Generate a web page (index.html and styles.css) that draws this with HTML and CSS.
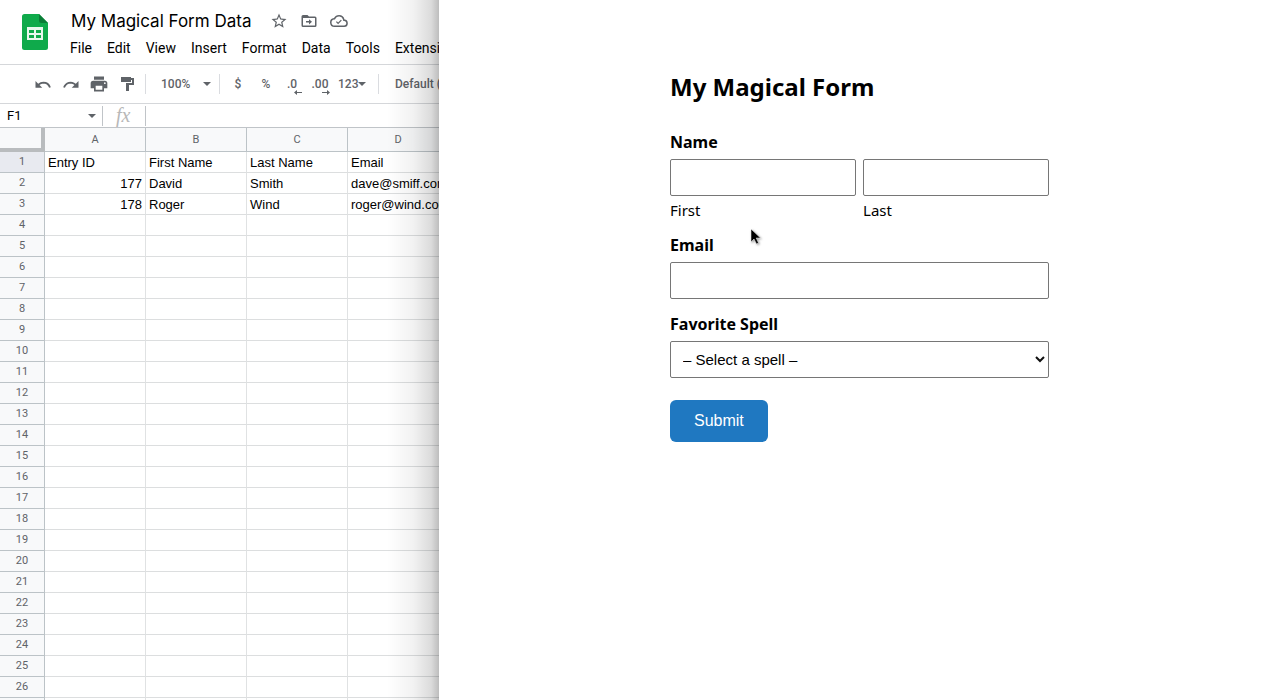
FILE: index.html
```html
<!DOCTYPE html>
<html lang="en">
<head>
  <meta charset="UTF-8">
  <meta name="viewport" content="width=device-width, initial-scale=1.0">
  <title>My Magical Form</title>
  <link rel="stylesheet" href="styles.css">
</head>
<body>
  <!-- Spreadsheet -->
  <section class="sheet">
    <header class="sheet-header">
      <svg class="logo" width="26" height="36" viewBox="0 0 26 36">
        <path fill="#0faa4b" d="M2.500 0H17l9 9v24.500a2.500 2.500 0 0 1-2.500 2.500h-21A2.500 2.500 0 0 1 0 33.500v-31A2.500 2.500 0 0 1 2.500 0z"/>
        <path fill="#0b7d37" d="M17 0l9 9h-6.500A2.500 2.500 0 0 1 17 6.500z"/>
        <path fill="#e9f8ee" fill-rule="evenodd" d="M5 13h16v13H5zM7 16v3h5v-3zM14 16v3h5v-3zM7 21v3h5v-3zM14 21v3h5v-3z"/>
      </svg>
      <div class="sheet-heading">
        <div class="title-row">
          <span class="sheet-title">My Magical Form Data</span>
          <button class="icon-button" aria-label="Star">
            <svg width="18" height="18" viewBox="0 0 24 24"><path fill="#5f6368" d="M22 9.240l-7.190-.620L12 2 9.190 8.630 2 9.240l5.460 4.730L5.820 21 12 17.270 18.180 21l-1.630-7.030L22 9.240zM12 15.400l-3.760 2.270 1-4.280-3.320-2.880 4.380-.380L12 6.100l1.710 4.040 4.380.380-3.320 2.880 1 4.280L12 15.400z"/></svg>
          </button>
          <button class="icon-button" aria-label="Move">
            <svg width="18" height="18" viewBox="0 0 24 24"><path fill="#5f6368" d="M20 6h-8l-2-2H4a2 2 0 0 0-2 2v12a2 2 0 0 0 2 2h16a2 2 0 0 0 2-2V8a2 2 0 0 0-2-2zm0 12H4V8h16v10zM8 12h4V9.500l4 3.500-4 3.500V14H8z"/></svg>
          </button>
          <button class="icon-button" aria-label="Document status">
            <svg width="18" height="18" viewBox="0 0 24 24"><path fill="#5f6368" d="M19.350 10.040A7.490 7.490 0 0 0 12 4 7.500 7.500 0 0 0 5.350 8.040 6 6 0 0 0 6 20h13a5 5 0 0 0 .350-9.960zM19 18H6a4 4 0 0 1-.420-7.970l1.070-.110.500-.950a5.500 5.500 0 0 1 10.240 1.460l.300 1.500 1.530.110A3 3 0 0 1 19 18zM10.800 13.900l-1.700-1.700-1.200 1.200 2.900 2.900 4.900-4.900-1.200-1.200z"/></svg>
          </button>
        </div>
        <nav class="menu">
          <button>File</button>
          <button>Edit</button>
          <button>View</button>
          <button>Insert</button>
          <button>Format</button>
          <button>Data</button>
          <button>Tools</button>
          <button>Extensions</button>
        </nav>
      </div>
    </header>

    <div class="toolbar">
      <button class="tool" aria-label="Undo">
        <svg width="18" height="18" viewBox="0 0 24 24"><path fill="#5f6368" d="M12.500 9c-2.650 0-5.050 1-6.900 2.600L2 8v9h9l-3.620-3.620A8 8 0 0 1 20.100 17l2.370-.780A10.500 10.500 0 0 0 12.500 9z"/></svg>
      </button>
      <button class="tool" aria-label="Redo">
        <svg width="18" height="18" viewBox="0 0 24 24"><path fill="#5f6368" d="M18.400 11.600A10.500 10.500 0 0 0 1.540 16.220L3.900 17a8 8 0 0 1 12.720-3.620L13 17h9V8z"/></svg>
      </button>
      <button class="tool" aria-label="Print">
        <svg width="20" height="20" viewBox="0 0 24 24"><path fill="#5f6368" d="M19 8H5a3 3 0 0 0-3 3v6h4v4h12v-4h4v-6a3 3 0 0 0-3-3zm-3 11H8v-5h8v5zm3-7a1 1 0 1 1 0-2 1 1 0 0 1 0 2zM18 3H6v4h12z"/></svg>
      </button>
      <button class="tool" aria-label="Paint format">
        <svg width="18" height="18" viewBox="0 0 18 18"><path fill="#5f6368" d="M13 3V2H3v5h10V5h1v3H8v8h3v-6h5V3h-3z"/></svg>
      </button>
      <span class="divider"></span>
      <button class="tool zoom">100% <span class="caret"></span></button>
      <span class="divider"></span>
      <button class="tool">$</button>
      <button class="tool">%</button>
      <button class="tool decimal">.0
        <svg class="decimal-arrow" width="8" height="5" viewBox="0 0 8 5"><path fill="#5f6368" d="M3 0v2h5v1H3v2L0 2.500z"/></svg>
      </button>
      <button class="tool decimal">.00
        <svg class="decimal-arrow" width="8" height="5" viewBox="0 0 8 5"><path fill="#5f6368" d="M5 0v2H0v1h5v2l3-2.500z"/></svg>
      </button>
      <button class="tool format">123<span class="caret"></span></button>
      <span class="divider"></span>
      <button class="tool font">Default (Arial)</button>
    </div>

    <div class="formula-bar">
      <button class="cell-name">F1 <span class="caret"></span></button>
      <span class="fx">fx</span>
      <input class="formula" type="text" aria-label="Formula">
    </div>

    <table class="grid">
      <thead>
        <tr><th class="corner"></th><th>A</th><th>B</th><th>C</th><th>D</th></tr>
      </thead>
      <tbody>
        <tr class="active"><th>1</th><td>Entry ID</td><td>First Name</td><td>Last Name</td><td>Email</td></tr>
        <tr><th>2</th><td class="num">177</td><td>David</td><td>Smith</td><td>dave@smiff.com</td></tr>
        <tr><th>3</th><td class="num">178</td><td>Roger</td><td>Wind</td><td>roger@wind.com</td></tr>
        <tr><th>4</th><td></td><td></td><td></td><td></td></tr>
        <tr><th>5</th><td></td><td></td><td></td><td></td></tr>
        <tr><th>6</th><td></td><td></td><td></td><td></td></tr>
        <tr><th>7</th><td></td><td></td><td></td><td></td></tr>
        <tr><th>8</th><td></td><td></td><td></td><td></td></tr>
        <tr><th>9</th><td></td><td></td><td></td><td></td></tr>
        <tr><th>10</th><td></td><td></td><td></td><td></td></tr>
        <tr><th>11</th><td></td><td></td><td></td><td></td></tr>
        <tr><th>12</th><td></td><td></td><td></td><td></td></tr>
        <tr><th>13</th><td></td><td></td><td></td><td></td></tr>
        <tr><th>14</th><td></td><td></td><td></td><td></td></tr>
        <tr><th>15</th><td></td><td></td><td></td><td></td></tr>
        <tr><th>16</th><td></td><td></td><td></td><td></td></tr>
        <tr><th>17</th><td></td><td></td><td></td><td></td></tr>
        <tr><th>18</th><td></td><td></td><td></td><td></td></tr>
        <tr><th>19</th><td></td><td></td><td></td><td></td></tr>
        <tr><th>20</th><td></td><td></td><td></td><td></td></tr>
        <tr><th>21</th><td></td><td></td><td></td><td></td></tr>
        <tr><th>22</th><td></td><td></td><td></td><td></td></tr>
        <tr><th>23</th><td></td><td></td><td></td><td></td></tr>
        <tr><th>24</th><td></td><td></td><td></td><td></td></tr>
        <tr><th>25</th><td></td><td></td><td></td><td></td></tr>
        <tr><th>26</th><td></td><td></td><td></td><td></td></tr>
        <tr><th></th><td></td><td></td><td></td><td></td></tr>
      </tbody>
    </table>
  </section>

  <!-- Form -->
  <main class="form-panel">
    <form class="form">
      <h1>My Magical Form</h1>
      <fieldset class="field">
        <legend>Name</legend>
        <div class="name-row">
          <div class="name-part">
            <input type="text" id="first">
            <label class="sub-label" for="first">First</label>
          </div>
          <div class="name-part">
            <input type="text" id="last">
            <label class="sub-label" for="last">Last</label>
          </div>
        </div>
      </fieldset>
      <div class="field">
        <label for="email">Email</label>
        <input type="email" id="email">
      </div>
      <div class="field">
        <label for="spell">Favorite Spell</label>
        <div class="select-wrap">
          <select id="spell">
            <option>– Select a spell –</option>
          </select>
          <svg class="chevron" width="10" height="7" viewBox="0 0 10 7"><path fill="none" stroke="#111" stroke-width="2" d="M1 1l4 4 4-4"/></svg>
        </div>
      </div>
      <button class="submit" type="submit">Submit</button>
    </form>
    <svg class="cursor" width="12" height="18" viewBox="0 0 12 18"><path fill="#000" stroke="#fff" stroke-width=".5" d="M1 1v13l3-3 2.500 5 2-1-2.300-5H10.500z"/></svg>
  </main>
</body>
</html>
```
FILE: styles.css
```css
* {
  box-sizing: border-box;
}

body {
  display: flex;
  height: 100vh;
  margin: 0;
  overflow: hidden;
  background-color: #fff;
  color: #000;
  font-family: "Liberation Sans", Arial, sans-serif;
}

button {
  margin: 0;
  padding: 0;
  border: 0;
  background: none;
  color: inherit;
  font: inherit;
  white-space: nowrap;
}

svg {
  display: block;
}

/* Spreadsheet */
.sheet {
  position: relative;
  flex: 0 0 34.3%;
  overflow: hidden;
  font-family: Roboto, sans-serif;
}

/* Shadow that the form panel casts on the sheet */
.sheet::after {
  content: "";
  position: absolute;
  top: 0;
  right: 0;
  bottom: 0;
  width: 52px;
  background: linear-gradient(to right, rgba(0, 0, 0, 0), rgba(0, 0, 0, 0.05) 50%, rgba(0, 0, 0, 0.14) 85%, rgba(0, 0, 0, 0.26));
  pointer-events: none;
}

.sheet-header {
  display: flex;
  gap: 22px;
  height: 65px;
  padding-left: 22px;
  border-bottom: 1px solid #d5d7da;
}

.logo {
  flex: none;
  margin-top: 14px;
}

.title-row {
  display: flex;
  align-items: center;
  gap: 12px;
  height: 24px;
  margin-top: 9px;
}

.sheet-title {
  margin: 0 7px 0 1px;
  font-family: Inter, sans-serif;
  font-size: 17px;
  line-height: 24px;
  white-space: nowrap;
}

.menu {
  display: flex;
  gap: 15px;
  margin-top: 5px;
  font-size: 14px;
  line-height: 20px;
}

.toolbar {
  display: flex;
  align-items: center;
  height: 39px;
  padding-left: 29px;
  border-bottom: 1px solid #d5d7da;
  color: #5f6368;
  font-size: 12px;
  font-weight: 500;
}

.tool {
  display: flex;
  flex: none;
  align-items: center;
  justify-content: center;
  width: 28px;
  height: 28px;
}

.divider {
  flex: none;
  width: 1px;
  height: 20px;
  margin-left: 4px;
  background-color: #dadce0;
}

.caret {
  border: 4px solid transparent;
  border-top-color: #5f6368;
  border-bottom: 0;
}

.zoom {
  justify-content: space-between;
  width: 69px;
  padding: 0 4px 0 15px;
}

.divider + .tool:not(.zoom):not(.font) {
  margin-left: 4px;
}

.decimal {
  position: relative;
  padding-right: 4px;
}

.decimal-arrow {
  position: absolute;
  right: 6px;
  bottom: 3px;
}

.format {
  justify-content: flex-start;
  width: 38px;
  padding-left: 2px;
}

.font {
  width: auto;
  margin-left: 16px;
}

.formula-bar {
  display: flex;
  align-items: center;
  height: 24px;
  border-bottom: 1px solid #c0c4c8;
}

.cell-name {
  display: flex;
  align-items: center;
  justify-content: space-between;
  width: 103px;
  height: 20px;
  padding: 0 6px 0 7px;
  border-right: 1px solid #c0c4c8;
  font-size: 13px;
}

.fx {
  width: 43px;
  height: 20px;
  padding-left: 13px;
  border-right: 1px solid #c0c4c8;
  color: #b8b8b8;
  font: italic 20px/18px "Liberation Serif", serif;
}

.formula {
  flex: 1;
  min-width: 0;
  height: 20px;
  border: 0;
}

.grid {
  width: 449px;
  border-spacing: 0;
  table-layout: fixed;
}

.grid th,
.grid td {
  height: 21px;
  padding: 0 3px;
  border-right: 1px solid #e0e2e3;
  border-bottom: 1px solid #dcdedf;
  overflow: hidden;
  line-height: 20px;
  white-space: nowrap;
}

.grid th {
  border-color: #bcc3c7;
  background-color: #f8f9fa;
  color: #5f6368;
  font-size: 11px;
  font-weight: 400;
}

.grid thead th {
  height: 24px;
}

.grid .corner {
  width: 45px;
  border-right: 4px solid #b9bcbe;
  border-bottom: 4px solid #b9bcbe;
}

.grid .active th {
  background-color: #e8eaf0;
}

.grid td {
  padding-top: 2px;
  font-family: "Liberation Sans", Arial, sans-serif;
  font-size: 13px;
  line-height: 18px;
}

.grid .num {
  text-align: right;
}

/* Form */
.form-panel {
  position: relative;
  flex: 1;
  padding: 69px 24px;
}

.form {
  max-width: 379px;
  margin: 0 auto;
  font-family: "Noto Sans", sans-serif;
}

h1 {
  margin: 0 0 26px;
  font-size: 24px;
  line-height: 36px;
}

.field {
  margin: 0 0 14px;
  padding: 0;
  border: 0;
}

legend,
.field label {
  display: block;
  padding: 0;
  font-size: 16px;
  font-weight: 700;
  line-height: 22px;
}

legend,
.field > label {
  margin-bottom: 6px;
}

.name-row {
  display: flex;
  gap: 7px;
}

.name-part {
  flex: 1;
  min-width: 0;
}

.field .sub-label {
  margin-top: 4px;
  font-size: 15px;
  font-weight: 400;
  line-height: 20px;
}

.field input,
.field select {
  display: block;
  width: 100%;
  height: 37px;
  padding: 0 12px;
  border: 1px solid #767676;
  border-radius: 2px;
  background-color: #fff;
  color: #000;
  font: 15px "Liberation Sans", Arial, sans-serif;
}

.field select {
  appearance: none;
}

.select-wrap {
  position: relative;
}

.chevron {
  position: absolute;
  top: 15px;
  right: 4px;
  pointer-events: none;
}

.submit {
  height: 42px;
  margin-top: 8px;
  padding: 0 24px;
  border-radius: 6px;
  background-color: #1f78c1;
  color: #fff;
  font: 16px "Liberation Sans", Arial, sans-serif;
}

/* Mouse pointer */
.cursor {
  position: absolute;
  top: 228px;
  left: 311px;
  filter: drop-shadow(1px 1px 1px rgba(0, 0, 0, 0.4));
}
```
